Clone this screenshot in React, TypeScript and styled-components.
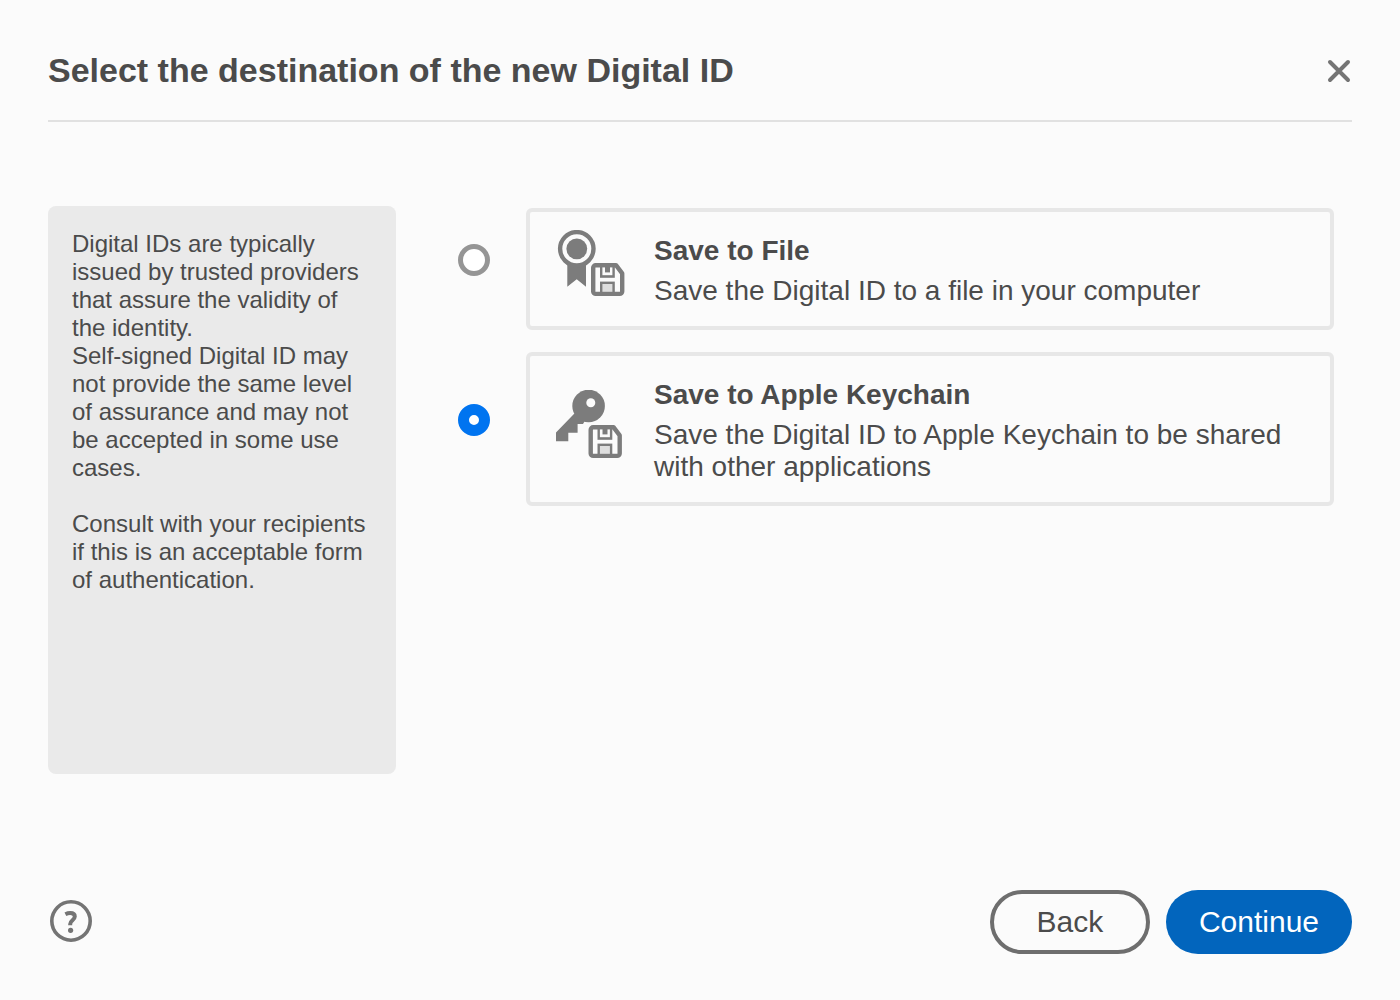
import React, { useState } from 'react';
import styled, { createGlobalStyle } from 'styled-components';

const GlobalStyle = createGlobalStyle`
  *, *::before, *::after { box-sizing: border-box; }
  body {
    margin: 0;
    background: #fbfbfb;
    color: #4b4b4b;
    font-family: "Liberation Sans", Arial, Helvetica, sans-serif;
  }
`;

const Dialog = styled.main`
  display: flex;
  flex-direction: column;
  min-height: 100vh;
  padding: 48px 48px 46px;
`;

const Header = styled.header`
  display: flex;
  align-items: center;
  justify-content: space-between;
  padding-bottom: 28px;
  border-bottom: 2px solid #e1e1e1;
`;

const Title = styled.h1`
  margin: 0;
  font-size: 34px;
  line-height: 44px;
  font-weight: 700;
`;

const IconButton = styled.button`
  display: flex;
  padding: 0;
  border: 0;
  background: none;
  color: #747474;
  cursor: pointer;
`;

const Content = styled.div`
  display: flex;
  flex: 1;
  gap: 62px;
  padding-top: 84px;
`;

const Notice = styled.aside`
  flex: 0 0 348px;
  padding: 24px;
  border-radius: 8px;
  background: #eaeaea;
  font-size: 24px;
  line-height: 28px;
`;

const Paragraph = styled.p<{ $spaced?: boolean }>`
  margin: ${(p) => (p.$spaced ? '28px' : '0')} 0 0;
`;

const Options = styled.div`
  display: flex;
  flex: 1;
  flex-direction: column;
  gap: 22px;
  padding: 2px 18px 0 0;
`;

const Option = styled.label`
  display: flex;
  align-items: center;
  gap: 36px;
  cursor: pointer;
`;

const Radio = styled.input`
  appearance: none;
  flex: none;
  width: 32px;
  height: 32px;
  margin: 0 0 18px;
  border: 5px solid #959595;
  border-radius: 50%;
  background: #ffffff;

  &:checked {
    border: 11px solid #0074f0;
  }
`;

const Card = styled.span`
  display: flex;
  flex: 1;
  align-items: center;
  gap: 28px;
  padding: 18px 24px 16px;
  border: 4px solid #e7e7e7;
  border-radius: 6px;
`;

const CardIcon = styled.svg`
  flex: none;
  width: 72px;
  height: 80px;
  color: #7c7c7c;
`;

const CardText = styled.span`
  display: flex;
  flex-direction: column;
  gap: 8px;
  padding: 5px 0 3px;
  font-size: 28px;
  line-height: 32px;
`;

const Footer = styled.footer`
  display: flex;
  align-items: center;
  justify-content: space-between;
  padding: 116px 0 0 2px;
`;

const Actions = styled.div`
  display: flex;
  gap: 16px;
`;

const Button = styled.button<{ $primary?: boolean }>`
  min-width: 160px;
  height: 64px;
  padding: 0 ${(p) => (p.$primary ? '33px' : '29px')};
  border: ${(p) => (p.$primary ? '0' : '4px solid #6e6e6e')};
  border-radius: 32px;
  background: ${(p) => (p.$primary ? '#0265bd' : 'transparent')};
  color: ${(p) => (p.$primary ? '#ffffff' : '#4b4b4b')};
  font-family: inherit;
  font-size: 30px;
  line-height: 36px;
  cursor: pointer;
`;

function Floppy({ x, y }: { x: number; y: number }) {
  return (
    <g transform={`translate(${x} ${y})`}>
      <path
        d="M4.7 2.2h20.3L31.2 10.4v18a2.5 2.5 0 0 1-2.5 2.5H4.7a2.5 2.5 0 0 1-2.5-2.5V4.7a2.5 2.5 0 0 1 2.5-2.5z"
        fill="#fbfbfb"
        stroke="currentColor"
        strokeWidth="4.4"
        strokeLinejoin="round"
      />
      <path d="M9 3h14.8v11.8H9z" fill="currentColor" />
      <path d="M11.4 4.4h10v7.8h-10z" fill="#fbfbfb" />
      <path d="M14 3h5v6.4h-5z" fill="currentColor" />
      <path d="M9 18.6h14.8V30H9z" fill="currentColor" />
      <path d="M11.4 21h10v7.8h-10z" fill="#dedede" />
    </g>
  );
}

function CertificateIcon() {
  return (
    <CardIcon viewBox="0 0 72 80" aria-hidden="true">
      <path d="M13.3 32H32v24.7l-9.3-7.4-9.4 7.4z" fill="currentColor" />
      <circle cx="22.8" cy="18.8" r="16.7" fill="#fbfbfb" stroke="currentColor" strokeWidth="4.4" />
      <circle cx="22.8" cy="18.8" r="10.4" fill="currentColor" />
      <Floppy x={37} y={33} />
    </CardIcon>
  );
}

function KeyIcon() {
  return (
    <CardIcon viewBox="0 0 72 80" aria-hidden="true">
      <path
        d="M20.4 23.4 2 42.4v8.9h12.3v-8.6h9.3v-8.6h5.4l2.4-4z"
        fill="currentColor"
      />
      <circle cx="34.6" cy="16" r="16.3" fill="currentColor" />
      <circle cx="36.8" cy="12.8" r="4.5" fill="#fbfbfb" />
      <Floppy x={34.5} y={35} />
    </CardIcon>
  );
}

const destinations = [
  {
    id: 'file',
    name: 'Save to File',
    description: 'Save the Digital ID to a file in your computer',
    Icon: CertificateIcon,
  },
  {
    id: 'keychain',
    name: 'Save to Apple Keychain',
    description: 'Save the Digital ID to Apple Keychain to be shared with other applications',
    Icon: KeyIcon,
  },
];

export default function App() {
  const [selected, setSelected] = useState('keychain');

  return (
    <>
      <GlobalStyle />
      <Dialog>
        <Header>
          <Title id="title">Select the destination of the new Digital ID</Title>
          <IconButton type="button" aria-label="Close">
            <svg width="26" height="26" viewBox="0 0 26 26" aria-hidden="true">
              <path d="M4 5l18 18M22 5L4 23" stroke="currentColor" strokeWidth="4" strokeLinecap="round" />
            </svg>
          </IconButton>
        </Header>
        <Content>
          <Notice>
            <Paragraph>
              Digital IDs are typically issued by trusted providers that assure the validity of the identity.
            </Paragraph>
            <Paragraph>
              Self-signed Digital ID may not provide the same level of assurance and may not be accepted in some use
              cases.
            </Paragraph>
            <Paragraph $spaced>
              Consult with your recipients if this is an acceptable form of authentication.
            </Paragraph>
          </Notice>
          <Options role="radiogroup" aria-labelledby="title">
            {destinations.map(({ id, name, description, Icon }) => (
              <Option key={id} htmlFor={id}>
                <Radio
                  type="radio"
                  id={id}
                  name="destination"
                  checked={selected === id}
                  onChange={() => setSelected(id)}
                />
                <Card>
                  <Icon />
                  <CardText>
                    <strong>{name}</strong>
                    <span>{description}</span>
                  </CardText>
                </Card>
              </Option>
            ))}
          </Options>
        </Content>
        <Footer>
          <IconButton type="button" aria-label="Help">
            <svg width="42" height="44" viewBox="0 0 42 44" fill="none" aria-hidden="true">
              <circle cx="21" cy="21" r="19.2" stroke="currentColor" strokeWidth="3.6" />
              <path
                d="M15.4 14.2c1.6-.8 3-1.2 4.8-1.2 2.9 0 4.6 1.3 4.6 3.5 0 3.6-4.6 3.9-4.6 7.5v1.3"
                stroke="currentColor"
                strokeWidth="4"
              />
              <circle cx="20.6" cy="30.3" r="2.6" fill="currentColor" />
            </svg>
          </IconButton>
          <Actions>
            <Button type="button">Back</Button>
            <Button type="button" $primary>
              Continue
            </Button>
          </Actions>
        </Footer>
      </Dialog>
    </>
  );
}
